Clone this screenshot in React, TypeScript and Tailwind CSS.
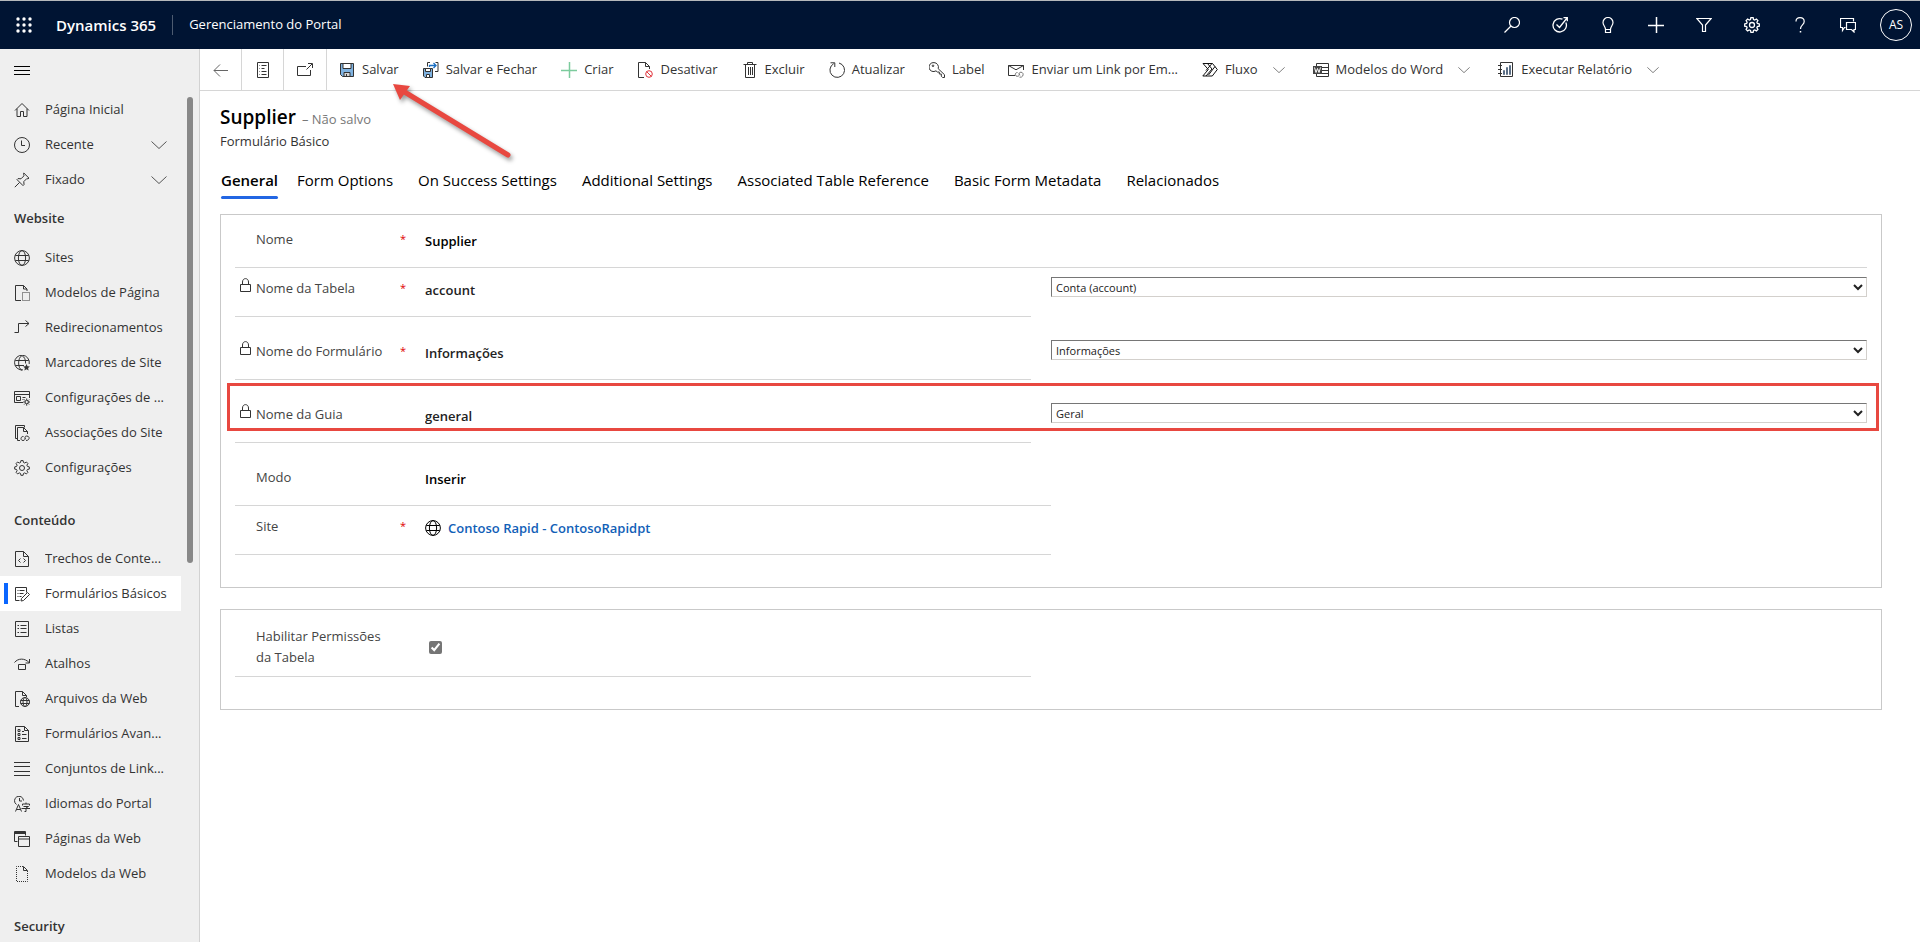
import type { ReactNode } from 'react'

type IconProps = { children: ReactNode; className?: string; size?: number }

function Icon({ children, className = '', size = 16 }: IconProps) {
  return (
    <svg
      width={size}
      height={size}
      viewBox="0 0 16 16"
      fill="none"
      stroke="currentColor"
      strokeWidth="1"
      className={'shrink-0 ' + className}
      aria-hidden="true"
    >
      {children}
    </svg>
  )
}

const gearPath =
  'M6.9.6h2.2l.4 1.9 1.2.5 1.7-1 1.5 1.5-1 1.7.5 1.2 1.9.5v2.2l-1.9.4-.5 1.2 1 1.7-1.5 1.5-1.7-1-1.2.5-.4 1.9H6.9l-.4-1.9-1.2-.5-1.7 1-1.5-1.5 1-1.7-.5-1.2-1.9-.4V6.9l1.9-.5.5-1.2-1-1.7L3.6 2l1.7 1 1.2-.5z'

function Globe() {
  return (
    <>
      <circle cx="8" cy="8" r="7.4" />
      <ellipse cx="8" cy="8" rx="3.6" ry="7.4" />
      <path d="M1.3 5.500h13.400M1.3 10.500h13.400" />
    </>
  )
}

function Chevron({ size = 16 }: { size?: number }) {
  return (
    <Icon size={size}>
      <path d="M.5 4.500l7.500 7 7.500-7" />
    </Icon>
  )
}

const icons = {
  home: <path d="M1 8.500l7-7 7 7M3 6.700V14.500h3.500v-5h3v5H13V6.700" />,
  clock: (
    <>
      <circle cx="8" cy="8" r="7.5" />
      <path d="M7.500 3.500v5H11" />
    </>
  ),
  pin: <path d="M.8 15.200l4.800-4.800M9.800 1l5.200 5.200-1.200.6-1-.2-3 3 .2 3-1 1L3 7.600l1-1 3 .2 3-3-.4-1.300z" />,
  globe: <Globe />,
  pageTemplate: (
    <>
      <path d="M7 15.500H1.500v-15h8l3.500 3.500v2M9.500.5V4H13" />
      <path d="M8.500 7.500h7v8h-7z" strokeDasharray="1 1" />
    </>
  ),
  redirect: <path d="M.5 12.500h4v-9H15M11.500.5l3.500 3-3.500 3" />,
  globeStar: (
    <>
      <path d="M9 14.900A7.400 7.400 0 1 1 15.200 9M8 15.400c-4.500-2-4.500-13 0-14.800 2.500 1.400 3.700 4 3.600 7.900M1.300 5.500h13.400M1.300 10.500H10" />
      <path d="M12.500 9l1 2.200 2.400.3-1.800 1.500.5 2.400-2.100-1.200-2.100 1.200.5-2.400-1.800-1.500 2.400-.3z" fill="currentColor" stroke="none" />
    </>
  ),
  siteSettings: (
    <>
      <path d="M9 12.500H.5v-11h15V8M.5 4.500h15M2.500 6.500h4v4h-4zM8.500 7.500h3M8.500 9.500h1" />
      <circle cx="12.700" cy="12" r="1.700" />
      <path d="M12.700 8.500v1.500M12.700 14v1.700M9.200 12h1.600M14.500 12h1.500M10.200 9.600l1.100 1M15.100 9.600l-1 1M10.200 14.500l1.100-1.100M15.100 14.500l-1-1.100" />
    </>
  ),
  association: (
    <>
      <path d="M3.500 13.500h-2V.5h9v2M6 15.500H3.500v-13h6l4 4V9M9.500 2.500v4h4" />
      <path d="M9.500 11.500c-3-.5-3.500 4-.5 4 2 0 2-1.500 2-2.500M12 15.500c4 0 4-4.500.8-4.500-2.300 0-2.300 2.500-.8 2.500" />
    </>
  ),
  gear: (
    <>
      <path d={gearPath} />
      <circle cx="8" cy="8" r="2.5" />
    </>
  ),
  code: (
    <path d="M9.500.5h-8v15h13V5.500zM9.500.5v5h5M6.500 7.500L4.500 9.500l2 2M9.500 7.500l2 2-2 2" />
  ),
  formEdit: (
    <path d="M5.500 14.500h-4v-13h11v5M3.500 4.500h1M5.500 4.500h5M3.500 7.500h1M5.500 7.500h4M3.500 10.500h1M5.500 10.500h2M7 15l.5-2.500 6-6 2 2-6 6z" />
  ),
  list: <path d="M1.500.5h13v15h-13zM3.500 4.500h1.500M6.500 4.500h6M3.500 7.500h1.500M6.500 7.500h6M3.500 11.500h1.500M6.500 11.500h6" />,
  shortcut: <path d="M.5 6.500C4 2 11 2 15 6.500M15.500 3v4h-4M4.500 8.500h7v5h-7z" />,
  webFile: (
    <>
      <path d="M5 15.500H1.500v-15h7l4 4V6M8.500.5v4h4" />
      <circle cx="11" cy="11" r="4.5" />
      <ellipse cx="11" cy="11" rx="2" ry="4.5" />
      <path d="M6.500 9.500h9M6.500 12.500h9" />
    </>
  ),
  advForm: (
    <path d="M10.500.5h-9v15h13v-11zM10.500.5v4h4M4 3.500h2v2H4zM4 7.500h2v2H4zM4 11.500h2v2H4zM8 5.500h2M8 8.500h4.500M8 12.500h4.500" />
  ),
  links: <path d="M0 1.500h16M0 5.500h16M0 10.500h16M0 14.500h16" />,
  language: (
    <>
      <path d="M2.500 8.500A4.500 4.500 0 1 1 9.500 4.500M5.500 2v3H8" />
      <path d="M1.500 15.500l3-7 3 7M2.500 13.500h4M8.500 9.500v-1.500h7v1.500M12 6.500V8M9.500 10.500h5L12 12v3.500h-1.500M7.500 12.500H16" />
    </>
  ),
  webPages: (
    <>
      <path d="M3.500 10.500h-3V.5h11v4M.5 2.500h11" />
      <path d="M1 1h10v1.500H1z" fill="currentColor" stroke="none" />
      <path d="M4.500 5.500h11v10h-11zM4.500 8h11" />
    </>
  ),
  webTemplate: (
    <>
      <path d="M9 .5H2.500v15h11V5" strokeDasharray="1 1" />
      <path d="M9.500 .5v4h4z" />
    </>
  ),
}

type IconName = keyof typeof icons

function NavItem({ icon, label, expandable, active }: { icon: IconName; label: string; expandable?: boolean; active?: boolean }) {
  return (
    <a
      href="#"
      className={
        'relative mr-[18px] flex h-[35px] items-center gap-[15px] pl-3.5 text-[13px] text-[#333] ' +
        (active ? 'bg-white' : '')
      }
    >
      {active && <span className="absolute left-1 top-[7px] h-[21px] w-1 bg-[#0a66ff]" />}
      <Icon>{icons[icon]}</Icon>
      <span className="grow truncate">{label}</span>
      {expandable && (
        <span className="mr-3.5 text-[#555]">
          <Chevron />
        </span>
      )}
    </a>
  )
}

const website: [IconName, string][] = [
  ['globe', 'Sites'],
  ['pageTemplate', 'Modelos de Página'],
  ['redirect', 'Redirecionamentos'],
  ['globeStar', 'Marcadores de Site'],
  ['siteSettings', 'Configurações de ...'],
  ['association', 'Associações do Site'],
  ['gear', 'Configurações'],
]

const content: [IconName, string][] = [
  ['code', 'Trechos de Conte...'],
  ['formEdit', 'Formulários Básicos'],
  ['list', 'Listas'],
  ['shortcut', 'Atalhos'],
  ['webFile', 'Arquivos da Web'],
  ['advForm', 'Formulários Avan...'],
  ['links', 'Conjuntos de Link...'],
  ['language', 'Idiomas do Portal'],
  ['webPages', 'Páginas da Web'],
  ['webTemplate', 'Modelos da Web'],
]

function Sidebar() {
  return (
    <nav className="relative w-[200px] shrink-0 overflow-hidden border-r border-[#d2d2d2] bg-[#efefef]">
      <button aria-label="Menu" className="flex h-[43px] items-center pl-3.5 text-black">
        <Icon>
          <path d="M0 3.500h16M0 7.500h16M0 11.500h16" />
        </Icon>
      </button>
      <NavItem icon="home" label="Página Inicial" />
      <NavItem icon="clock" label="Recente" expandable />
      <NavItem icon="pin" label="Fixado" expandable />
      <h2 className="flex h-[43px] items-center pl-3.5 text-[13px] font-semibold text-[#333]">Website</h2>
      {website.map(([icon, label]) => (
        <NavItem key={label} icon={icon} label={label} />
      ))}
      <h2 className="flex h-14 items-center pl-3.5 pt-4 text-[13px] font-semibold text-[#333]">Conteúdo</h2>
      {content.map(([icon, label]) => (
        <NavItem key={label} icon={icon} label={label} active={label === 'Formulários Básicos'} />
      ))}
      <h2 className="flex h-14 items-center pl-3.5 pt-4 text-[13px] font-semibold text-[#333]">Security</h2>
      <div className="absolute right-1.5 top-12 h-[466px] w-1.5 rounded-full bg-[#888]" />
    </nav>
  )
}

function HeaderButton({ label, children }: { label: string; children: ReactNode }) {
  return (
    <button aria-label={label} className="flex w-12 items-center justify-center">
      <Icon>{children}</Icon>
    </button>
  )
}

function Header() {
  return (
    <header className="flex h-[49px] shrink-0 items-stretch border-t border-[#b5b8bb] bg-[#001433] text-white">
      <button aria-label="Aplicativos" className="flex w-12 items-center justify-center">
        <Icon>
          <g fill="currentColor" stroke="none">
            {[2, 8, 14].map((y) => [2, 8, 14].map((x) => <circle key={`${x}-${y}`} cx={x} cy={y} r="1.7" />))}
          </g>
        </Icon>
      </button>
      <div className="flex grow items-center">
        <span className="pl-2 text-[15px] font-semibold">Dynamics 365</span>
        <span className="mx-4 h-5 w-px bg-[#4d5b70]" />
        <span className="text-[13px]">Gerenciamento do Portal</span>
      </div>
      <HeaderButton label="Pesquisar">
        <circle cx="10.500" cy="5.500" r="5" strokeWidth="1.200" />
        <path d="M7 9l-6.500 6.500" strokeWidth="1.200" />
      </HeaderButton>
      <HeaderButton label="Assistente">
        <path d="M13.800 5.500A6.700 6.700 0 1 1 10.500 2.200M4.500 7.500l3 3L15 1M11.500.7l3.800-.2v3.800" strokeWidth="1.300" />
      </HeaderButton>
      <HeaderButton label="Ideias">
        <path d="M5.500 12.500C5.500 9.500 3 8.500 3 5.500a5 5 0 0 1 10 0c0 3-2.500 4-2.500 7zM5.500 12.500v3h5v-3" strokeWidth="1.200" />
      </HeaderButton>
      <HeaderButton label="Adicionar">
        <path d="M0 8.500h16M8.500 0v16" strokeWidth="1.500" />
      </HeaderButton>
      <HeaderButton label="Filtrar">
        <path d="M.8 1.500h14.400L9.500 8v6.500h-3V8z" strokeWidth="1.200" />
      </HeaderButton>
      <HeaderButton label="Configurações">
        <g strokeWidth="1.300">{icons.gear}</g>
      </HeaderButton>
      <HeaderButton label="Ajuda">
        <path d="M4 4.500C4 2 5.500.6 8 .6s4.200 1.500 4.200 3.900c0 3.300-3.700 3.700-3.700 7.500" strokeWidth="1.200" />
        <path d="M8.500 14v1.500" strokeWidth="1.500" />
      </HeaderButton>
      <HeaderButton label="Comentários">
        <path d="M5.500 10.500h-1l-2 3v-3h-2v-9h13v3M6.500 5.500h9v7h-1.500v2.500l-2.500-2.500h-5z" strokeWidth="1.200" />
      </HeaderButton>
      <button aria-label="Conta" className="flex w-12 items-center justify-center">
        <span className="flex size-8 items-center justify-center rounded-full border border-white text-xs">AS</span>
      </button>
    </header>
  )
}

function Floppy() {
  return (
    <>
      <path d="M1.500 1.500h13v13h-11l-2-2z" fill="#7fb2e0" stroke="#333" />
      <path d="M4 1.500h8v5H4z" fill="#fff" stroke="#333" />
      <path d="M5 10.500h6v4H5z" fill="#d5d5d5" stroke="#333" />
      <path d="M7.500 12v2.500" stroke="#333" />
    </>
  )
}

function Command({ label, icon, menu }: { label: string; icon: ReactNode; menu?: boolean }) {
  return (
    <button className="flex items-center gap-[7px] whitespace-nowrap px-3 text-[#333]">
      <Icon>{icon}</Icon>
      <span>{label}</span>
      {menu && (
        <span className="mr-1 ml-2 text-[#555]">
          <Chevron size={12} />
        </span>
      )}
    </button>
  )
}

function CommandBar() {
  return (
    <div role="toolbar" className="flex h-[42px] shrink-0 items-stretch border-b border-[#d6d6d6] text-[13px]">
      <button aria-label="Voltar" className="flex w-[42px] items-center justify-center border-r border-[#d6d6d6] text-[#666]">
        <Icon>
          <path d="M7 2.500l-6 6 6 6M1 8.500h14" />
        </Icon>
      </button>
      <button aria-label="Formulário" className="flex w-[42px] items-center justify-center border-r border-[#d6d6d6] text-[#333]">
        <Icon>
          <path d="M2.500.5h11v15h-11zM4.500 3.500H5M6.500 3.500h5M4.500 6.500H5M6.500 6.500h3M4.500 9.500H5M6.500 9.500h5M4.500 12.500H5M6.500 12.500h5" />
        </Icon>
      </button>
      <button aria-label="Abrir em nova janela" className="flex w-[43px] items-center justify-center border-r border-[#d6d6d6] text-[#333]">
        <Icon>
          <path d="M9 4.500H.5v9h13V8M9.500 7.500L15 2M11 1.500h4.500V6" />
        </Icon>
      </button>
      <div className="flex">
        <Command label="Salvar" icon={<Floppy />} />
        <Command
          label="Salvar e Fechar"
          icon={
            <>
              <path d="M.5 6.500h9v9h-7.500l-1.500-1.500z" fill="#7fb2e0" stroke="#333" />
              <path d="M2.500 6.500h5v3h-5z" fill="#fff" />
              <path d="M3.500 12.500h3v3h-3z" fill="#fff" />
              <path d="M7 .5H4.500v4M12.500 .5H15v9h-3" />
              <path d="M6.500 5V3.500h6M10.500 1l2.500 2.500L10.500 6" stroke="#1a6fc4" strokeWidth="1.300" />
            </>
          }
        />
        <Command label="Criar" icon={<path d="M8.500 0v16M0 8.500h16" stroke="#7ccb9d" strokeWidth="1.500" />} />
        <Command
          label="Desativar"
          icon={
            <>
              <path d="M7 15.500H1.500V.5h7l4 4V7M8.500.5v4h4" />
              <circle cx="12" cy="12" r="3.300" stroke="#e0343c" />
              <path d="M9.700 9.700l4.600 4.600" stroke="#e0343c" />
            </>
          }
        />
        <Command
          label="Excluir"
          icon={<path d="M1.500 2.500h13M5.500 2.500v-2h5v2M3.500 2.500v13h9v-13M6.500 5v8M8.500 5v8M10.500 5v8" />}
        />
        <Command label="Atualizar" icon={<path d="M4.700 1.700A7.300 7.300 0 1 0 10 1M1.500.8h4.300v4.200" />} />
        <Command
          label="Label"
          icon={
            <>
              <path d="M5 .6a4.500 4.500 0 1 0 2 8.200l1.300 1.200h2v2h2v2.200l1.300 1.300h1.900v-2.800L9.200 6.700A4.600 4.600 0 0 0 5 .6z" />
              <circle cx="4" cy="3.800" r=".8" />
            </>
          }
        />
        <Command
          label="Enviar um Link por Em..."
          icon={
            <>
              <path d="M7 13.500H.5v-10h15V8M.5 3.500L8 7.800l7.500-4.300" />
              <path d="M9.500 10.500c-3 0-2.800 3.800-.3 3.800 2 0 2.300-1.300 2-2.700M11.500 15.200c4 .8 5-4.700 1.500-5-2.300 0-2.500 2.500-.8 2.900" stroke="#777" />
            </>
          }
        />
        <Command
          label="Fluxo"
          menu
          icon={<path d="M1 1.500h9.500L15.300 7.500l-5 6.500H.8l5.500-6.500zM5.500 1.500L10 7l-6 7M10 1.500L4 8.500M13 4.500L6.500 13" stroke="#111" />}
        />
        <Command
          label="Modelos do Word"
          menu
          icon={
            <>
              <path d="M3.500 4V1.500h12v13h-12V12M9 5.500h6.500M9 8.500h6.500M9 11.500h6.500" />
              <path d="M0 4h9v8H0z" fill="#444" stroke="none" />
              <path d="M1.500 5.500l1.500 5 1.500-4 1.500 4 1.500-5" stroke="#fff" />
            </>
          }
        />
        <Command
          label="Executar Relatório"
          menu
          icon={
            <>
              <path d="M2.500.5h12v14h-12zM0 3.500h4M0 7.500h4M0 11.500h4" />
              <path d="M5.500 8.500h1v4h-1zM8.500 5.500h1v7h-1zM11.500 3.500h1v9h-1z" stroke="#5b6f86" />
            </>
          }
        />
      </div>
    </div>
  )
}

type FieldProps = {
  id: string
  label: string
  required?: boolean
  locked?: boolean
  className?: string
  children: ReactNode
}

function Field({ id, label, required, locked, className = '', children }: FieldProps) {
  return (
    <div className={'flex items-start border-b border-[#d6d6d6] pb-4 ' + className}>
      <div className="flex w-[190px] shrink-0 items-start pt-2.5">
        <span className="w-[21px] pl-1 text-[#333]">
          {locked && (
            <Icon>
              <path d="M1.500 6.500h10v7h-10zM3.500 6.500V4C3.500-.5 9.500-.5 9.500 4v2.500" />
            </Icon>
          )}
        </span>
        <label htmlFor={id} className="w-36 text-[13px] leading-5 text-[#444]">
          {label}
        </label>
        {required && <span className="text-[11px] leading-5 text-[#e00000]">*</span>}
      </div>
      <div className="flex min-w-0 grow items-center pt-3 text-[13px] leading-5 font-semibold">{children}</div>
    </div>
  )
}

function Value({ id, value, locked }: { id: string; value: string; locked?: boolean }) {
  return (
    <input
      id={id}
      defaultValue={value}
      readOnly={locked}
      className={'h-5 w-full bg-transparent outline-none ' + (locked ? 'text-[#222]' : 'text-black')}
    />
  )
}

function Picker({ label, value }: { label: string; value: string }) {
  return (
    <select
      aria-label={label}
      defaultValue={value}
      className="mt-[9px] h-5 w-full self-start border border-[#d3d0cc] border-t-[#767676] border-l-[#767676] text-[11px] text-[#222]"
    >
      <option>{value}</option>
    </select>
  )
}

const tabs = [
  'General',
  'Form Options',
  'On Success Settings',
  'Additional Settings',
  'Associated Table Reference',
  'Basic Form Metadata',
  'Relacionados',
]

function Form() {
  return (
    <section className="mt-[15px] mr-[38px] ml-5 border border-[#c9c9c9] px-3.5 pb-8">
      <Field id="nome" label="Nome" required className="pt-1">
        <Value id="nome" value="Supplier" />
      </Field>
      <div className="grid grid-cols-2">
        <Field id="tabela" label="Nome da Tabela" required locked className="mr-5">
          <Value id="tabela" value="account" locked />
        </Field>
        <Picker label="Tabela" value="Conta (account)" />
      </div>
      <div className="grid grid-cols-2 pt-3.5">
        <Field id="formulario" label="Nome do Formulário" required locked className="mr-5">
          <Value id="formulario" value="Informações" locked />
        </Field>
        <Picker label="Formulário" value="Informações" />
      </div>
      <div className="relative grid grid-cols-2 pt-3.5">
        <Field id="guia" label="Nome da Guia" locked className="mr-5">
          <Value id="guia" value="general" locked />
        </Field>
        <Picker label="Guia" value="Geral" />
        <div className="pointer-events-none absolute top-[3px] -right-3 -left-2 h-12 border-3 border-[#e84840]" />
      </div>
      <div className="w-1/2 pt-3.5">
        <Field id="modo" label="Modo">
          <Value id="modo" value="Inserir" />
        </Field>
      </div>
      <div className="w-1/2">
        <Field id="site" label="Site" required>
          <Icon className="mr-[7px] text-black">
            <Globe />
          </Icon>
          <a id="site" href="#" className="text-[#1160b7]">
            Contoso Rapid - ContosoRapidpt
          </a>
        </Field>
      </div>
    </section>
  )
}

function Arrow() {
  return (
    <svg
      width="130"
      height="90"
      viewBox="0 0 130 90"
      className="pointer-events-none absolute top-[31px] left-[189px] drop-shadow-[2px_3px_2px_rgba(0,0,0,0.4)]"
      aria-hidden="true"
    >
      <path d="M14 11L119 75" stroke="#e84840" strokeWidth="5" strokeLinecap="round" />
      <path d="M4 4L21 6L11 20z" fill="#e84840" />
    </svg>
  )
}

export default function App() {
  return (
    <div className="flex h-screen flex-col overflow-hidden bg-white font-['Open_Sans','Noto_Sans',sans-serif]">
      <Header />
      <div className="flex min-h-0 grow">
        <Sidebar />
        <main className="relative flex min-w-0 grow flex-col">
          <CommandBar />
          <div className="pt-3 pl-5">
            <div className="flex items-baseline gap-1.5">
              <h1 className="text-[19px] leading-7 font-semibold text-black">Supplier</h1>
              <span className="text-[13px] text-[#777]">– Não salvo</span>
            </div>
            <p className="text-[13px] leading-5 font-medium text-[#333]">Formulário Básico</p>
          </div>
          <div role="tablist" className="mt-[17px] flex h-[31px] items-start gap-[25px] pl-[21px] text-[15px]">
            {tabs.map((tab, i) => (
              <button
                key={tab}
                role="tab"
                aria-selected={i === 0}
                className={
                  'h-[31px] pb-1.5 whitespace-nowrap text-black ' +
                  (i === 0 ? 'relative -mr-1.5 font-semibold' : '')
                }
              >
                {tab}
                {i === 0 && <span className="absolute inset-x-0 bottom-0 h-[3px] rounded-full bg-[#2266e3]" />}
              </button>
            ))}
          </div>
          <Form />
          <section className="mt-[21px] mr-[38px] ml-5 border border-[#c9c9c9] px-3.5 pb-8">
            <div className="w-1/2 pr-5">
              <div className="flex border-b border-[#d6d6d6] pt-4 pb-2">
                <label htmlFor="permissoes" className="ml-[21px] w-[130px] text-[13px] leading-[21px] text-[#444]">
                  Habilitar Permissões da Tabela
                </label>
                <input
                  id="permissoes"
                  type="checkbox"
                  defaultChecked
                  className="ml-[43px] size-[13px] self-center accent-[#757575]"
                />
              </div>
            </div>
          </section>
          <Arrow />
        </main>
      </div>
    </div>
  )
}
